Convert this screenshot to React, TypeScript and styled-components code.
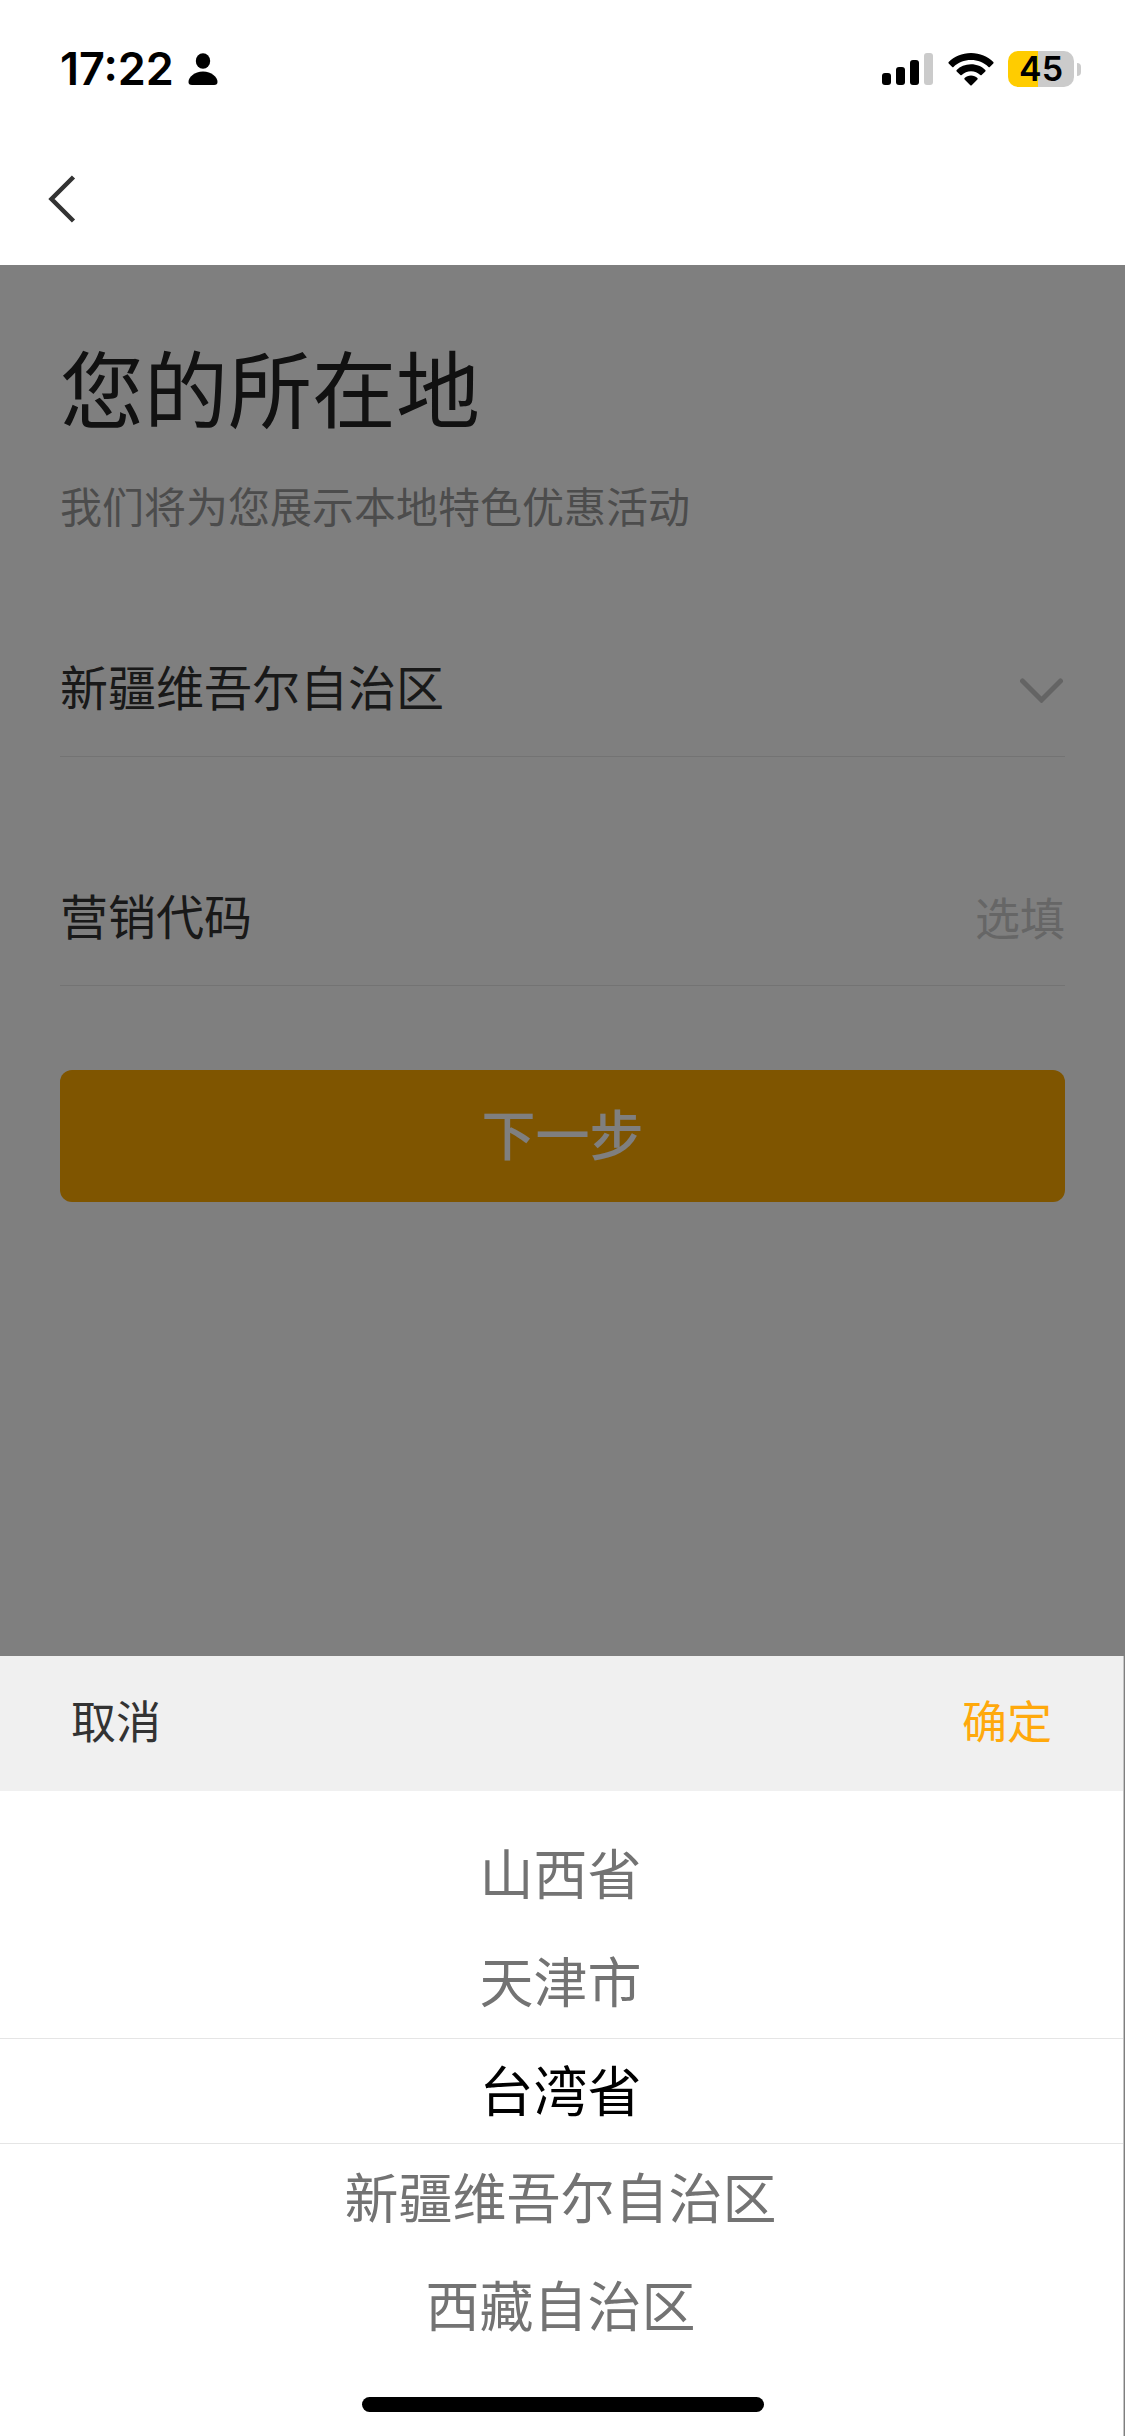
import React, { useState } from "react";
import styled, { createGlobalStyle } from "styled-components";

const GlobalStyle = createGlobalStyle`
  * { box-sizing: border-box; }
  body {
    margin: 0;
    background: #fff;
    font-family: "Noto Sans CJK SC", sans-serif;
  }
  button, input, select { font: inherit; color: inherit; }
  button, select { cursor: pointer; }
`;

const Screen = styled.div`
  display: flex;
  flex-direction: column;
  min-height: 100vh;
  background: #fff;
`;

const StatusBar = styled.header`
  display: flex;
  align-items: center;
  justify-content: space-between;
  height: 132px;
  padding: 6px 44px 0 60px;
  font-family: Inter, "Liberation Sans", sans-serif;
  color: #000;
`;

const StatusGroup = styled.div`
  display: flex;
  align-items: center;
  gap: 14px;
`;

const Clock = styled.time`
  font-size: 45px;
  line-height: 54px;
  font-weight: 600;
`;

const Battery = styled.div`
  display: flex;
  align-items: center;
  gap: 3px;
`;

const BatteryBody = styled.div<{ $level: number }>`
  width: 66px;
  height: 36px;
  border-radius: 10px;
  background: linear-gradient(to right, #ffcc00 ${(p) => p.$level}%, #cbcbcb ${(p) => p.$level}%);
  font-size: 34px;
  line-height: 36px;
  font-weight: 600;
  text-align: center;
`;

const BatteryTip = styled.div`
  width: 4px;
  height: 13px;
  border-radius: 0 4px 4px 0;
  background: #cbcbcb;
`;

const NavBar = styled.nav`
  display: flex;
  align-items: center;
  height: 133px;
  padding: 0 23px;
`;

const BackButton = styled.button`
  display: flex;
  align-items: center;
  justify-content: center;
  width: 78px;
  height: 78px;
  padding: 0;
  border: 0;
  background: none;
`;

/* Page and dialog share one grid cell, so the dialog lies over the page. */
const Stage = styled.div`
  display: grid;
  flex: 1;
`;

const Page = styled.main`
  grid-area: 1 / 1;
  padding: 61px 60px 0;
`;

const Title = styled.h1`
  margin: 0;
  font-size: 84px;
  line-height: 120px;
  font-weight: 400;
  color: #222;
`;

const Subtitle = styled.p`
  margin: 29px 0 0;
  font-size: 42px;
  line-height: 60px;
  color: #999;
`;

const Field = styled.div`
  display: flex;
  align-items: center;
  justify-content: space-between;
  height: 138px;
  border-bottom: 1px solid #e6e6e6;
  font-size: 48px;
  line-height: 66px;
  color: #333;
`;

const Form = styled.form`
  display: flex;
  flex-direction: column;
  gap: 91px;
  margin-top: 84px;
`;

const ProvinceSelect = styled.select`
  flex: 1;
  height: 72px;
  padding: 0 0 6px;
  border: 0;
  appearance: none;
  background: none;
`;

const FieldLabel = styled.label`
  padding-bottom: 6px;
`;

const CodeInput = styled.input`
  flex: 1;
  min-width: 0;
  height: 72px;
  padding: 0;
  border: 0;
  background: none;
  font-size: 45px;
  text-align: right;
  &::placeholder { color: #ccc; opacity: 1; }
`;

const NextButton = styled.button`
  height: 132px;
  margin-top: -7px;
  padding: 0 0 8px;
  border: 0;
  border-radius: 12px;
  background: #ffaa00;
  font-size: 54px;
  font-weight: 500;
  color: #fff;
`;

const Mask = styled.div`
  grid-area: 1 / 1;
  z-index: 1;
  display: flex;
  flex-direction: column;
  justify-content: flex-end;
  background: rgba(0, 0, 0, 0.5);
`;

const Sheet = styled.section`
  margin-right: 1px;
  border-right: 1px solid #c4c4c4;
  background: #fff;
`;

const SheetBar = styled.div`
  display: flex;
  align-items: center;
  justify-content: space-between;
  height: 135px;
  padding: 0 71px 8px;
  background: #f0f0f0;
`;

const SheetAction = styled.button<{ $primary?: boolean }>`
  padding: 0;
  border: 0;
  background: none;
  font-size: 45px;
  line-height: 66px;
  color: ${(p) => (p.$primary ? "#ffa90c" : "#333")};
`;

const Wheel = styled.fieldset`
  margin: 0;
  padding: 29px 0 0;
  border: 0;
`;

const WheelRow = styled.label<{ $selected: boolean }>`
  display: flex;
  align-items: center;
  justify-content: center;
  height: ${(p) => (p.$selected ? 106 : 108)}px;
  margin-top: ${(p) => (p.$selected ? 2 : 0)}px;
  padding: 0 2px 4px 0;
  border: solid #e5e5e5;
  border-width: ${(p) => (p.$selected ? "1px 0" : "0")};
  font-size: 54px;
  line-height: 78px;
  color: ${(p) => (p.$selected ? "#000" : "#737373")};
  cursor: pointer;
`;

const WheelInput = styled.input`
  appearance: none;
  width: 0;
  height: 0;
  margin: 0;
`;

const HomeArea = styled.div`
  display: flex;
  justify-content: center;
  padding: 37px 0 24px 2px;
`;

const HomeIndicator = styled.div`
  width: 402px;
  height: 15px;
  border-radius: 8px;
  background: #000;
`;

const PersonIcon = () => (
  <svg width="30" height="32" viewBox="0 0 30 32" aria-hidden="true">
    <ellipse cx="15" cy="8" rx="7.2" ry="7.8" />
    <path d="M4 32C1.500 32 .5 30.800 .5 29C.5 24 6.500 18.500 15 18.500S29.500 24 29.500 29C29.500 30.800 28.500 32 26 32Z" />
  </svg>
);

const SignalIcon = () => (
  <svg width="52" height="32" viewBox="0 0 52 32" aria-hidden="true">
    <rect x="0" y="20" width="9" height="12" rx="3" />
    <rect x="14" y="14" width="9" height="18" rx="3" />
    <rect x="28" y="7" width="9" height="25" rx="3" />
    <rect x="42" y="0" width="9" height="32" rx="3" fill="#cbcbcb" />
  </svg>
);

const WifiIcon = () => (
  <svg width="46" height="33" viewBox="0 0 46 33" aria-hidden="true">
    <path d="M23 0C32 0 39.800 3.500 45.300 9Q46 9.700 45.300 10.400L41.800 13.900Q41.200 14.500 40.500 13.900C35.800 9.500 29.800 7 23 7S10.200 9.500 5.500 13.900Q4.800 14.500 4.200 13.900L.7 10.400Q0 9.700 .7 9C6.200 3.500 14 0 23 0Z" />
    <path d="M23 11.300C28.800 11.300 33.800 13.500 37.300 17Q38 17.700 37.300 18.400L33.600 22Q33 22.600 32.300 22C29.800 19.700 26.600 18.200 23 18.200S16.200 19.700 13.700 22Q13 22.600 12.400 22L8.700 18.400Q8 17.700 8.700 17C12.200 13.500 17.200 11.300 23 11.300Z" />
    <path d="M23 22.600C25.600 22.600 27.800 23.600 29.400 25Q30.100 25.700 29.400 26.400L23.700 32.200Q23 32.900 22.300 32.200L16.600 26.400Q15.900 25.700 16.600 25C18.200 23.600 20.400 22.600 23 22.600Z" />
  </svg>
);

const BackIcon = () => (
  <svg width="28" height="48" viewBox="0 0 28 48" fill="none" stroke="#333" strokeWidth="4.500" aria-hidden="true">
    <path d="M25.500 2L3.500 24L25.500 46" />
  </svg>
);

const ChevronIcon = () => (
  <svg width="45" height="30" viewBox="0 0 45 30" fill="none" stroke="#c8c8c8" strokeWidth="5" strokeLinecap="round" aria-hidden="true">
    <path d="M2.500 8L21.500 27L40.500 8" />
  </svg>
);

const PROVINCES = ["山西省", "天津市", "台湾省", "新疆维吾尔自治区", "西藏自治区"];

export default function App() {
  const [province, setProvince] = useState("新疆维吾尔自治区");
  const [picked, setPicked] = useState("台湾省");

  return (
    <>
      <GlobalStyle />
      <Screen>
        <StatusBar>
          <StatusGroup>
            <Clock>17:22</Clock>
            <PersonIcon />
          </StatusGroup>
          <StatusGroup>
            <SignalIcon />
            <WifiIcon />
            <Battery>
              <BatteryBody $level={46}>45</BatteryBody>
              <BatteryTip />
            </Battery>
          </StatusGroup>
        </StatusBar>
        <NavBar>
          <BackButton type="button" aria-label="返回">
            <BackIcon />
          </BackButton>
        </NavBar>
        <Stage>
          <Page>
            <Title>您的所在地</Title>
            <Subtitle>我们将为您展示本地特色优惠活动</Subtitle>
            <Form onSubmit={(e) => e.preventDefault()}>
              <Field>
                <ProvinceSelect
                  aria-label="所在地"
                  value={province}
                  onChange={(e) => setProvince(e.target.value)}
                >
                  {PROVINCES.map((name) => (
                    <option key={name}>{name}</option>
                  ))}
                </ProvinceSelect>
                <ChevronIcon />
              </Field>
              <Field>
                <FieldLabel htmlFor="code">营销代码</FieldLabel>
                <CodeInput id="code" type="text" placeholder="选填" />
              </Field>
              <NextButton type="submit">下一步</NextButton>
            </Form>
          </Page>
          <Mask>
            <Sheet role="dialog" aria-label="所在地">
              <SheetBar>
                <SheetAction type="button">取消</SheetAction>
                <SheetAction type="button" $primary onClick={() => setProvince(picked)}>
                  确定
                </SheetAction>
              </SheetBar>
              <Wheel aria-label="所在地">
                {PROVINCES.map((name) => (
                  <WheelRow key={name} $selected={name === picked}>
                    <WheelInput
                      type="radio"
                      name="province"
                      checked={name === picked}
                      onChange={() => setPicked(name)}
                    />
                    {name}
                  </WheelRow>
                ))}
              </Wheel>
              <HomeArea>
                <HomeIndicator />
              </HomeArea>
            </Sheet>
          </Mask>
        </Stage>
      </Screen>
    </>
  );
}
